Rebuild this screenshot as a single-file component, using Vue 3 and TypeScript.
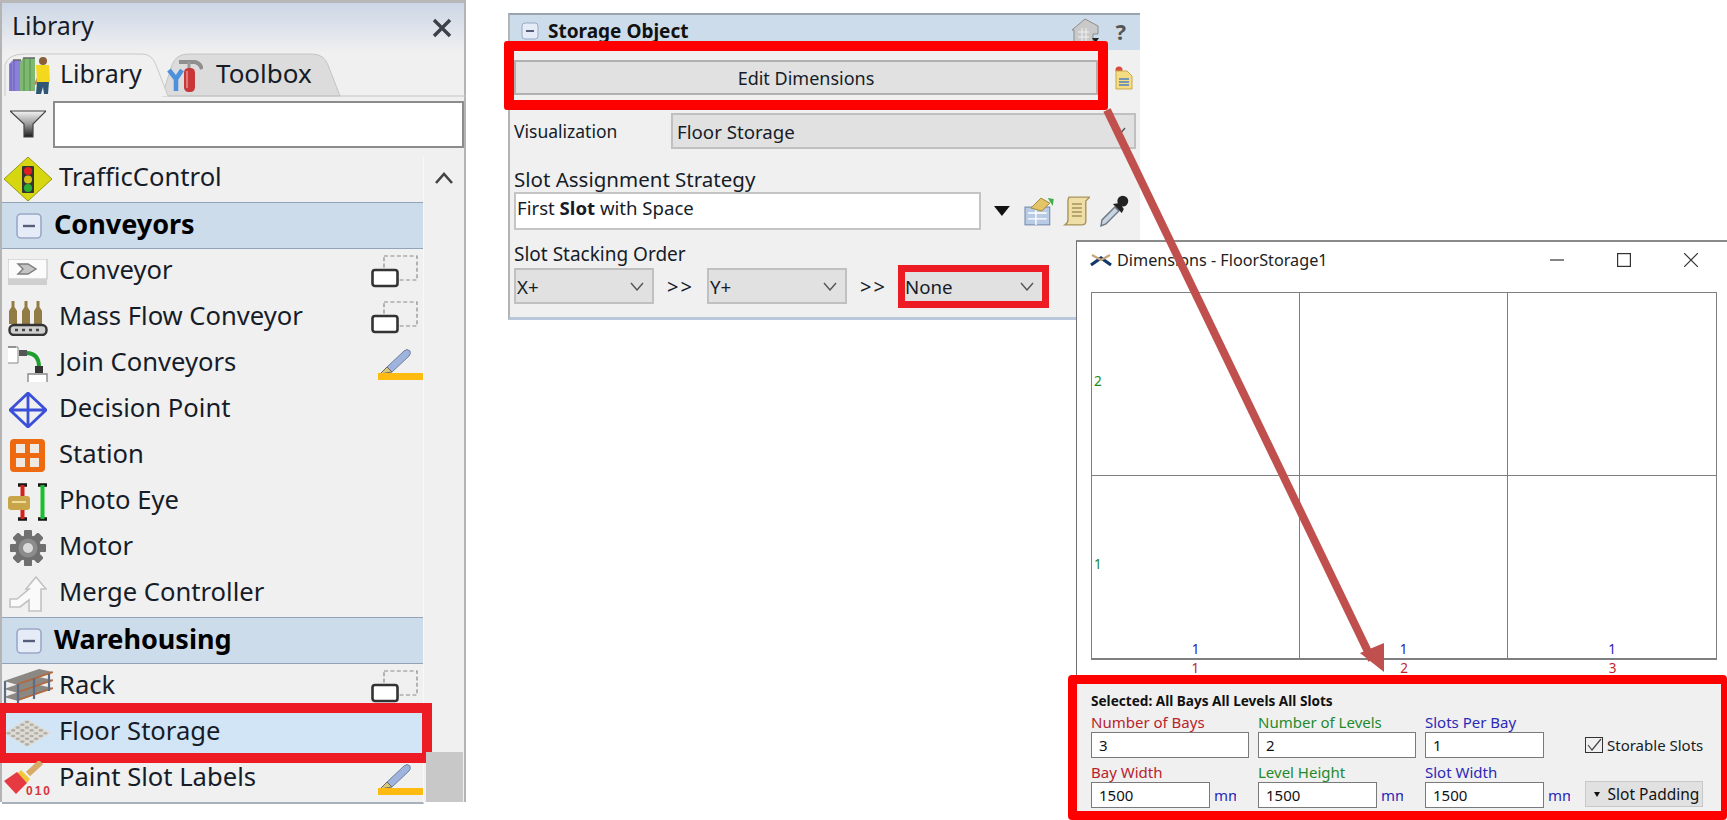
<script setup lang="ts">
interface LibraryRow {
  label: string
  icon: string
  tool?: 'size' | 'pen'
  header?: boolean
  selected?: boolean
}

const rows: LibraryRow[] = [
  { label: 'TrafficControl', icon: 'traffic' },
  { label: 'Conveyors', icon: 'minus', header: true },
  { label: 'Conveyor', icon: 'conveyor', tool: 'size' },
  { label: 'Mass Flow Conveyor', icon: 'massflow', tool: 'size' },
  { label: 'Join Conveyors', icon: 'join', tool: 'pen' },
  { label: 'Decision Point', icon: 'decision' },
  { label: 'Station', icon: 'station' },
  { label: 'Photo Eye', icon: 'photoeye' },
  { label: 'Motor', icon: 'motor' },
  { label: 'Merge Controller', icon: 'merge' },
  { label: 'Warehousing', icon: 'minus', header: true },
  { label: 'Rack', icon: 'rack', tool: 'size' },
  { label: 'Floor Storage', icon: 'floor', selected: true },
  { label: 'Paint Slot Labels', icon: 'paint', tool: 'pen' }
]

const cells = [
  { level: '2', bay: '' },
  { level: '', bay: '' },
  { level: '', bay: '' },
  { level: '1', bay: '1' },
  { level: '', bay: '1' },
  { level: '', bay: '1' }
]

const gearTeeth = [0, 45, 90, 135, 180, 225, 270, 315]

// dots of the floor storage tile, laid out on an isometric 5x5 grid
const floorDots: { x: number; y: number }[] = []
for (let u = 0; u < 5; u++) {
  for (let v = 0; v < 5; v++) {
    floorDots.push({ x: 23 + (u - v) * 4.6, y: 4 + (u + v) * 2.8 })
  }
}
</script>

<template>
  <div class="page">
    <aside class="library">
      <div class="library-title">
        <span class="title-text">Library</span>
        <svg class="close-x" width="20" height="20" viewBox="0 0 20 20">
          <path d="M2 2 18 18M18 2 2 18" stroke="#3c4048" stroke-width="3.4" fill="none" />
        </svg>
      </div>

      <div class="tabs">
        <svg class="tab-shape" width="464" height="44" viewBox="0 0 464 44">
          <path d="M160 43 L170 12 Q174 1 186 1 L310 1 Q322 1 326 12 L338 43 Z" fill="#dcdcdc" stroke="#c4c4c4" />
          <path d="M3 43 L3 12 Q6 1 22 1 L140 1 Q150 1 154 12 L166 43" fill="#f0f0f0" stroke="#c8c8c8" />
          <path d="M166 43 H464" stroke="#c4c4c4" />
        </svg>
        <div class="tab tab-library">
          <svg width="42" height="40" viewBox="0 0 42 40">
            <path d="M1 9 5 5H13V36H1Z" fill="#8a80d8" />
            <path d="M3 9V36M6 6V36" stroke="#6a60bc" />
            <path d="M12 8 15 3H27V36H12Z" fill="#7fb872" />
            <path d="M16 4V36M22 4V36" stroke="#4f8f48" />
            <path d="M5 5H13M15 3H27" stroke="#666" stroke-width="1.6" />
            <path d="M33 14 26 29 28 30 33 20Z" fill="#b98a56" />
            <circle cx="35" cy="6" r="4" fill="#8a5f38" />
            <path d="M28 10H41L42 27H29Z" fill="#f4d81e" />
            <path d="M29 27H41L40 39H36L35 32 33 39H28Z" fill="#2f5674" />
          </svg>
          <span>Library</span>
        </div>
        <div class="tab tab-toolbox">
          <svg width="36" height="36" viewBox="0 0 36 36">
            <path d="M12 5H28Q33 6 35 12" stroke="#8f8f8f" stroke-width="4" fill="none" />
            <path d="M22 5V12" stroke="#9a9a9a" stroke-width="3" fill="none" />
            <path d="M2 13 9 22V34M15 13 9 22" stroke="#4f90dc" stroke-width="4.6" fill="none" />
            <rect x="17" y="11" width="11" height="24" rx="4.500" fill="#c8383a" />
            <path d="M20 14V31" stroke="#e98a88" stroke-width="1.6" />
          </svg>
          <span>Toolbox</span>
        </div>
      </div>

      <div class="filter">
        <svg width="36" height="28" viewBox="0 0 36 28">
          <defs>
            <linearGradient id="funnel-fill" x1="0" y1="0" x2="0" y2="1">
              <stop offset="0" stop-color="#f4f4f4" />
              <stop offset="0.5" stop-color="#9a9a9a" />
              <stop offset="1" stop-color="#1c1c1c" />
            </linearGradient>
          </defs>
          <path d="M0 1H36L23 14V27H14V14Z" fill="url(#funnel-fill)" stroke="#444" stroke-width="1.2" />
        </svg>
        <div class="filter-input"></div>
      </div>

      <div class="list-wrap">
        <div class="list">
          <div
            v-for="row in rows"
            :key="row.label"
            class="row"
            :class="{ 'row-header': row.header, 'row-selected': row.selected }"
          >
            <span class="row-icon">
              <svg v-if="row.icon === 'minus'" width="26" height="26" viewBox="0 0 26 26">
                <rect x="1" y="1" width="24" height="24" rx="4" fill="#e6ecf7" stroke="#9aa8c8" stroke-width="1.6" />
                <path d="M7 13H19" stroke="#555f7a" stroke-width="2.4" />
              </svg>
              <svg v-else-if="row.icon === 'traffic'" width="48" height="44" viewBox="0 0 48 44">
                <path d="M24 0 48 22 24 44 0 22Z" fill="#d6d611" stroke="#9a9a10" />
                <rect x="18" y="9" width="12" height="27" rx="1" fill="#333" />
                <circle cx="24" cy="14" r="4" fill="#e02020" />
                <circle cx="24" cy="22.5" r="4" fill="#cfc30f" />
                <circle cx="24" cy="31" r="4" fill="#2cae32" />
              </svg>
              <svg v-else-if="row.icon === 'conveyor'" width="40" height="26" viewBox="0 0 40 26">
                <rect x="0" y="0" width="39" height="20" fill="#fbfbfb" stroke="#bbb" />
                <rect x="0" y="20" width="39" height="6" fill="#cfcfcf" />
                <path d="M10 5 H20 L28 10 20 15 H10 L15 10Z" fill="#c4c4c4" stroke="#7c7c7c" stroke-width="1.4" />
              </svg>
              <svg v-else-if="row.icon === 'massflow'" width="40" height="36" viewBox="0 0 40 36">
                <path d="M1 24V11L3.500 7V1H6.500V7L9 11V24ZM14 24V11L16.500 7V1H19.500V7L22 11V24ZM26 24V11L28.500 7V1H31.500V7L34 11V24Z" fill="#927c46" />
                <rect x="1.500" y="25" width="37" height="10" rx="4.500" fill="#cfcfcf" stroke="#333" stroke-width="2.4" />
                <path d="M7 30H33" stroke="#444" stroke-width="2.400" stroke-dasharray="3 4" />
              </svg>
              <svg v-else-if="row.icon === 'join'" width="40" height="36" viewBox="0 0 40 36">
                <path d="M0 1H10V17H0" fill="#fff" stroke="#888" />
                <path d="M0 1H8" stroke="#888" stroke-width="1.600" />
                <path d="M18 7C27 7 31 12 31 21" stroke="#1f9e2f" stroke-width="4" fill="none" />
                <rect x="11" y="4" width="8" height="6" fill="#555" />
                <rect x="27" y="20" width="8" height="7" fill="#333" />
                <path d="M20 36V28H39V36" fill="#fff" stroke="#888" stroke-width="1.400" />
              </svg>
              <svg v-else-if="row.icon === 'decision'" width="38" height="36" viewBox="0 0 38 36">
                <path d="M19 1 37 18 19 35 1 18ZM19 1V35M1 18H37" fill="none" stroke="#3b4fd8" stroke-width="2.8" />
              </svg>
              <svg v-else-if="row.icon === 'station'" width="36" height="34" viewBox="0 0 36 34">
                <rect x="0" y="0" width="35" height="33" rx="4" fill="#ee6a10" />
                <rect x="6" y="5" width="9" height="9" fill="#efe9e2" />
                <rect x="20" y="5" width="9" height="9" fill="#efe9e2" />
                <rect x="6" y="19" width="9" height="9" fill="#efe9e2" />
                <rect x="20" y="19" width="9" height="9" fill="#efe9e2" />
              </svg>
              <svg v-else-if="row.icon === 'photoeye'" width="40" height="38" viewBox="0 0 40 38">
                <path d="M10 2H19M10 36H19M30 2H39M30 36H39" stroke="#161616" stroke-width="3.6" />
                <path d="M14.5 2V36" stroke="#d62020" stroke-width="4" />
                <path d="M34.5 2V36" stroke="#19bf2e" stroke-width="4" />
                <rect x="0" y="13" width="22" height="14" rx="3" fill="#c9a54a" />
                <path d="M4 19H18" stroke="#eedc9c" stroke-width="2" />
              </svg>
              <svg v-else-if="row.icon === 'motor'" width="40" height="36" viewBox="0 0 40 36">
                <g fill="#707070">
                  <rect
                    v-for="deg in gearTeeth"
                    :key="deg"
                    x="16"
                    y="0"
                    width="8"
                    height="36"
                    rx="1.500"
                    :transform="`rotate(${deg} 20 18)`"
                  />
                </g>
                <circle cx="20" cy="18" r="13" fill="#707070" />
                <circle cx="20" cy="18" r="9.500" fill="#8c8c8c" />
                <circle cx="20" cy="18" r="5" fill="#dadada" />
              </svg>
              <svg v-else-if="row.icon === 'merge'" width="38" height="36" viewBox="0 0 38 36">
                <path d="M27 1 37 13H32V35H20V24L11 31H1V23H8L20 13H17Z" fill="#fafafa" stroke="#c2c2c2" stroke-width="1.6" />
              </svg>
              <svg v-else-if="row.icon === 'rack'" width="50" height="36" viewBox="0 0 50 36">
                <path d="M1 12 36 0 50 3 15 16ZM1 20 36 8 50 11 15 24ZM1 28 36 16 50 19 15 32Z" fill="#8b8782" />
                <path d="M15 15 50 3M15 23 50 11M15 31 50 19" stroke="#b5683a" stroke-width="1.800" />
                <path d="M2 12V36M15 15V36M31 9V30M46 5V22" stroke="#5f6b84" stroke-width="2.200" />
              </svg>
              <svg v-else-if="row.icon === 'floor'" width="48" height="30" viewBox="0 0 48 30">
                <path d="M0 15 23 1 47 15 23 29Z" fill="#dedcd5" />
                <ellipse
                  v-for="(dot, i) in floorDots"
                  :key="i"
                  :cx="dot.x"
                  :cy="dot.y"
                  rx="2.300"
                  ry="1.300"
                  fill="#b2b0a9"
                />
              </svg>
              <svg v-else-if="row.icon === 'paint'" width="50" height="36" viewBox="0 0 50 36">
                <path d="M38 1 25 13" stroke="#d8aa68" stroke-width="6" fill="none" />
                <path d="M18 9 27 18 24 22 14 13Z" fill="#f0c83a" />
                <path d="M1 20 14 11 24 22 13 33Z" fill="#e63a42" />
                <text x="23" y="34" class="paint-digits">010</text>
              </svg>
            </span>
            <span class="row-label">{{ row.label }}</span>
            <svg v-if="row.tool === 'size'" class="row-tool" width="48" height="34" viewBox="0 0 48 34">
              <rect x="13" y="1" width="33" height="24" fill="none" stroke="#8a8a8a" stroke-width="1.2" stroke-dasharray="4 2.4" />
              <rect x="1.5" y="15" width="25" height="16" rx="2.5" fill="#fff" stroke="#333" stroke-width="2.6" />
            </svg>
            <svg v-else-if="row.tool === 'pen'" class="row-tool pen" width="45" height="32" viewBox="0 0 45 32">
              <path d="M9 19 26 3Q29 0 32 3 33 6 31 8L14 24Z" fill="#9fb4dc" stroke="#6f7f9f" />
              <path d="M9 19 14 24 2 26Z" fill="#d8c77a" stroke="#666" />
              <rect x="0" y="25" width="45" height="7" fill="#ffbb12" />
            </svg>
          </div>
        </div>
        <div class="scrollbar">
          <svg class="chevron" width="20" height="14" viewBox="0 0 20 14">
            <path d="M2 12 10 3 18 12" fill="none" stroke="#444" stroke-width="2.6" />
          </svg>
          <div class="thumb"></div>
        </div>
      </div>
    </aside>

    <section class="storage">
      <header class="storage-head">
        <svg width="18" height="18" viewBox="0 0 18 18">
          <rect x="1" y="1" width="16" height="16" rx="3" fill="#e6ecf7" stroke="#9aa8c8" />
          <path d="M5 9H13" stroke="#555f7a" stroke-width="2" />
        </svg>
        <span class="storage-title">Storage Object</span>
        <svg class="storage-house" width="28" height="26" viewBox="0 0 28 26">
          <path d="M1 12 14 1 27 8V16H22V25H3V12Z" fill="#c9c9c9" stroke="#8c8c8c" />
          <path d="M7 14H18M7 19H18M11 10V25M15 10V25" stroke="#f2f2f2" />
          <path d="M21 20H28L24.500 25Z" fill="#222" />
        </svg>
        <span class="help">?</span>
      </header>

      <div class="edit-row">
        <button class="edit-btn">Edit Dimensions</button>
        <svg class="clip-icon" width="20" height="24" viewBox="0 0 20 24">
          <circle cx="6" cy="4" r="3.500" fill="#d84a3a" />
          <path d="M3 5H14L19 10V23H3Z" fill="#f4dc82" stroke="#c8a94e" />
          <path d="M6 13H16M6 16H16M6 19H16" stroke="#4f7cc4" stroke-width="1.4" />
        </svg>
      </div>

      <div class="vis-row">
        <span class="text-label">Visualization</span>
        <div class="combo vis-combo">
          <span>Floor Storage</span>
          <svg width="14" height="9" viewBox="0 0 14 9"><path d="M1 1 7 8 13 1" fill="none" stroke="#555" stroke-width="1.4" /></svg>
        </div>
      </div>

      <div class="text-label strategy-label">Slot Assignment Strategy</div>
      <div class="strategy-row">
        <div class="strategy-input">First <b>Slot</b> with Space</div>
        <svg class="caret" width="16" height="10" viewBox="0 0 16 10"><path d="M0 0H16L8 10Z" fill="#111" /></svg>
        <svg width="30" height="30" viewBox="0 0 30 30">
          <rect x="1" y="11" width="25" height="18" fill="#b8cbe4" stroke="#6f86a8" />
          <path d="M4 17H23M4 23H23M12 11V29" stroke="#fff" stroke-width="1.4" />
          <path d="M7 12 17 2 26 7 18 15Z" fill="#e4c468" stroke="#a58a2e" />
          <path d="M24 2 30 3 29 10Z" fill="#3fae4a" />
        </svg>
        <svg width="28" height="30" viewBox="0 0 28 30">
          <path d="M6 1H27L23 5V25Q23 29 19 29H2Q5 27 5 24V4Z" fill="#efdfa6" stroke="#a7935a" stroke-width="1.4" />
          <path d="M9 8H19M9 12H19M9 16H19M9 20H19" stroke="#a7935a" stroke-width="1.6" />
        </svg>
        <svg width="30" height="34" viewBox="0 0 30 34">
          <path d="M2 32 3 26 16 13 20 17 7 30Z" fill="#c8d4e0" stroke="#6d7782" stroke-width="1.4" />
          <path d="M14 10 23 19 25 15 21 9Z" fill="#222" />
          <circle cx="24" cy="7" r="5.500" fill="#222" />
        </svg>
      </div>

      <div class="text-label order-label">Slot Stacking Order</div>
      <div class="order-row">
        <div class="combo order-combo">
          <span>X+</span>
          <svg width="14" height="9" viewBox="0 0 14 9"><path d="M1 1 7 8 13 1" fill="none" stroke="#555" stroke-width="1.4" /></svg>
        </div>
        <span class="gtgt">&gt;&gt;</span>
        <div class="combo order-combo">
          <span>Y+</span>
          <svg width="14" height="9" viewBox="0 0 14 9"><path d="M1 1 7 8 13 1" fill="none" stroke="#555" stroke-width="1.4" /></svg>
        </div>
        <span class="gtgt">&gt;&gt;</span>
        <div class="combo none-combo">
          <span>None</span>
          <svg width="14" height="9" viewBox="0 0 14 9"><path d="M1 1 7 8 13 1" fill="none" stroke="#555" stroke-width="1.4" /></svg>
        </div>
      </div>
    </section>

    <section class="dims">
      <header class="dims-title">
        <svg width="24" height="14" viewBox="0 0 24 14">
          <path d="M2 12 12 5 22 12" fill="none" stroke="#12386b" stroke-width="3.200" />
          <path d="M3 2 12 7 21 2" fill="none" stroke="#c6a57c" stroke-width="2.200" />
        </svg>
        <span class="dims-name">Dimensions - FloorStorage1</span>
        <svg class="win-btn" width="14" height="14" viewBox="0 0 14 14"><path d="M0 7H14" stroke="#333" stroke-width="1.200" /></svg>
        <svg class="win-btn" width="14" height="14" viewBox="0 0 14 14"><rect x=".6" y=".6" width="12.800" height="12.800" fill="none" stroke="#333" stroke-width="1.200" /></svg>
        <svg class="win-btn" width="14" height="14" viewBox="0 0 14 14"><path d="M0 0 14 14M14 0 0 14" stroke="#333" stroke-width="1.200" /></svg>
      </header>

      <div class="grid">
        <div v-for="(cell, i) in cells" :key="i" class="cell">
          <span class="level-no">{{ cell.level }}</span>
          <span class="slot-no">{{ cell.bay }}</span>
        </div>
      </div>
      <div class="bay-numbers">
        <span>1</span>
        <span>2</span>
        <span>3</span>
      </div>

      <div class="form">
        <div class="selected">Selected: All Bays All Levels All Slots</div>
        <div class="form-grid">
          <div class="field">
            <label class="red">Number of Bays</label>
            <div class="input wide">3</div>
          </div>
          <div class="field">
            <label class="green">Number of Levels</label>
            <div class="input wide">2</div>
          </div>
          <div class="field">
            <label class="blue">Slots Per Bay</label>
            <div class="input narrow">1</div>
          </div>
          <div class="check">
            <span class="check-box">
              <svg width="15" height="13" viewBox="0 0 15 13"><path d="M1 7 5 12 14 1" fill="none" stroke="#444" stroke-width="1.200" /></svg>
            </span>
            <span>Storable Slots</span>
          </div>
          <div class="field">
            <label class="red">Bay Width</label>
            <div class="with-unit"><div class="input narrow">1500</div><span class="unit">mm</span></div>
          </div>
          <div class="field">
            <label class="green">Level Height</label>
            <div class="with-unit"><div class="input narrow">1500</div><span class="unit">mm</span></div>
          </div>
          <div class="field">
            <label class="blue">Slot Width</label>
            <div class="with-unit"><div class="input narrow">1500</div><span class="unit">mm</span></div>
          </div>
          <button class="padding-btn"><i class="mini-caret"></i>Slot Padding</button>
        </div>
      </div>
    </section>

    <svg class="arrow" width="1727" height="820" viewBox="0 0 1727 820">
      <path d="M1107 110 1372 660" stroke="#c0504d" stroke-width="8" fill="none" />
      <path d="M1360 653 1384 643 1384 672Z" fill="#c0504d" />
    </svg>
  </div>
</template>

<style>
html,
body {
  margin: 0;
  background: #fff;
}
</style>

<style scoped>
.page {
  position: relative;
  display: flex;
  align-items: flex-start;
  width: 1727px;
  height: 820px;
  overflow: hidden;
  background: #fff;
  font-family: 'Noto Sans', 'Open Sans', sans-serif;
  color: #161c28;
}

/* left library panel */
.library {
  box-sizing: border-box;
  width: 466px;
  height: 802px;
  border-top: 3px solid #b8b8b8;
  border-left: 2px solid #b4b4b4;
  border-right: 2px solid #b4b4b4;
  background: #f0f0f0;
  display: flex;
  flex-direction: column;
}

.library-title {
  height: 50px;
  flex: none;
  display: flex;
  align-items: center;
  justify-content: space-between;
  padding: 0 12px 0 10px;
  font-size: 25px;
  background: linear-gradient(#ccd6e6, #f0f0f0);
}

.title-text {
  margin-top: -7px;
}

.tabs {
  position: relative;
  height: 44px;
  flex: none;
  display: flex;
  font-size: 25px;
}

.tab-shape {
  position: absolute;
  left: 0;
  top: 0;
}

.tab {
  position: relative;
  display: flex;
  align-items: center;
}

.tab span {
  margin-top: -5px;
}

.tab-library {
  width: 163px;
  padding-left: 6px;
  gap: 10px;
  box-sizing: border-box;
}

.tab-toolbox {
  padding-left: 2px;
  gap: 13px;
  font-size: 26px;
}

.filter {
  height: 54px;
  flex: none;
  display: flex;
  align-items: center;
  padding-left: 8px;
  gap: 7px;
}

.filter-input {
  flex: 1;
  height: 47px;
  box-sizing: border-box;
  background: #fff;
  border: 2px solid #8c8c8c;
}

.list-wrap {
  flex: 1;
  display: flex;
  min-height: 0;
  padding-top: 5px;
}

.list {
  width: 421px;
  flex: none;
  border-right: 1px solid #f8f8f8;
  border-bottom: 2px solid #a8b0bc;
  margin-bottom: -2px;
}

.row {
  position: relative;
  height: 46px;
  display: flex;
  align-items: center;
  font-size: 25.6px;
}

.row-icon {
  width: 57px;
  flex: none;
  display: flex;
  justify-content: center;
  padding-right: 5px;
  box-sizing: border-box;
}

.row-label {
  flex: 1;
  white-space: nowrap;
  margin-top: -5px;
}

.row-tool {
  margin-right: 4px;
}

.row-tool.pen {
  margin-right: 0;
}

.row-header {
  height: 47px;
  box-sizing: border-box;
  background: #cddcea;
  border-top: 1px solid #94a4b8;
  border-bottom: 1px solid #94a4b8;
  font-weight: 700;
  font-size: 27px;
  color: #000;
}

.row-header .row-icon {
  width: 52px;
  padding-right: 0;
  padding-left: 2px;
}

.row-selected {
  background: #d2e5f6;
}

.row-selected::after {
  content: '';
  position: absolute;
  left: -2px;
  right: -9px;
  top: -7px;
  bottom: -7px;
  border: 10px solid #ed1c24;
  border-left-width: 6px;
  pointer-events: none;
}

.paint-digits {
  font-family: 'Liberation Sans', sans-serif;
  font-size: 12px;
  font-weight: 700;
  letter-spacing: 2px;
  fill: #d8353b;
}

.scrollbar {
  flex: 1;
  position: relative;
}

.chevron {
  position: absolute;
  left: 10px;
  top: 15px;
}

.thumb {
  position: absolute;
  left: 2px;
  right: 1px;
  bottom: 0;
  height: 50px;
  background: #c8c8c8;
}

/* storage object properties */
.storage {
  box-sizing: border-box;
  width: 632px;
  height: 307px;
  margin: 13px 0 0 42px;
  padding: 0 2px 0 4px;
  background: #f0f0f0;
  border-top: 2px solid #9aa4b0;
  border-left: 2px solid #b4b4b4;
  border-bottom: 3px solid #b8c8da;
}

.storage-head {
  box-sizing: border-box;
  height: 35px;
  margin: 0 -2px 0 -4px;
  padding: 0 14px 4px 11px;
  background: #cddcea;
  display: flex;
  align-items: center;
  gap: 9px;
}

.storage-title {
  flex: 1;
  font-weight: 700;
  font-size: 19px;
  color: #111;
}

.storage-house {
  margin-right: 8px;
}

.help {
  font-weight: 700;
  font-size: 22px;
  color: #555;
}

.edit-row {
  position: relative;
  height: 60px;
  display: flex;
  align-items: flex-start;
  gap: 15px;
  margin-left: -2px;
}

.edit-row::before {
  content: '';
  position: absolute;
  left: -8px;
  width: 604px;
  top: -9px;
  height: 69px;
  box-sizing: border-box;
  border: 10px solid #f00;
  border-radius: 3px;
  pointer-events: none;
}

.edit-btn {
  width: 584px;
  height: 35px;
  margin-left: 2px;
  margin-top: 10px;
  background: #e1e1e1;
  border: 2px solid #b0b0b0;
  font-family: inherit;
  font-size: 18px;
  color: #161c28;
}

.clip-icon {
  margin-top: 16px;
}

.vis-row {
  display: flex;
  align-items: center;
  height: 36px;
  margin-top: 3px;
}

.text-label {
  font-size: 19px;
  white-space: nowrap;
}

.vis-row .text-label {
  width: 157px;
  font-size: 17.5px;
}

.combo {
  box-sizing: border-box;
  height: 36px;
  background: #e1e1e1;
  border: 2px solid #c0c0c0;
  display: flex;
  align-items: center;
  justify-content: space-between;
  font-size: 18.7px;
  padding: 0 8px 0 1px;
}

.vis-combo {
  width: 465px;
  padding-left: 4px;
}

.strategy-label {
  margin-top: 18px;
  height: 25px;
  line-height: 25px;
  font-size: 20.5px;
}

.strategy-row {
  display: flex;
  align-items: center;
  height: 38px;
}

.strategy-input {
  box-sizing: border-box;
  width: 471px;
  height: 38px;
  background: #fff;
  border: 2px solid #c4c4c4;
  font-size: 18.6px;
  line-height: 28px;
  padding: 0 0 0 1px;
  margin-right: 13px;
}

.strategy-row svg {
  margin-right: 9px;
}

.caret {
  margin-right: 14px !important;
}

.order-label {
  margin-top: 13px;
  height: 23px;
  line-height: 23px;
}

.order-row {
  display: flex;
  align-items: center;
  height: 40px;
}

.order-combo {
  width: 140px;
}

.gtgt {
  width: 53px;
  text-align: center;
  font-size: 20px;
  letter-spacing: 2px;
}

.none-combo {
  box-sizing: border-box;
  width: 151px;
  height: 43px;
  border: 7px solid #ed1c24;
  margin-left: -2px;
  padding-left: 0;
}

/* dimensions window */
.dims {
  position: absolute;
  left: 1076px;
  top: 240px;
  right: 0;
  bottom: 0;
  box-sizing: border-box;
  background: #fff;
  border-top: 2px solid #8a8a8a;
  border-left: 1px solid #707070;
  display: flex;
  flex-direction: column;
}

.dims-title {
  height: 36px;
  flex: none;
  display: flex;
  align-items: center;
  padding: 0 29px 0 12px;
  font-size: 16.2px;
  color: #222;
}

.dims-name {
  flex: 1;
  margin-left: 4px;
}

.win-btn {
  margin-left: 53px;
}

.grid {
  flex: none;
  margin: 14px 10px 0 14px;
  height: 368px;
  box-sizing: border-box;
  display: grid;
  grid-template-columns: repeat(3, 1fr);
  grid-template-rows: repeat(2, 1fr);
  border: 1px solid #7f7f7f;
  border-bottom-width: 2px;
}

.cell {
  position: relative;
  display: flex;
  align-items: center;
  border-right: 1px solid #7f7f7f;
  border-bottom: 1px solid #7f7f7f;
  font-size: 13.5px;
}

.cell:nth-child(3n) {
  border-right: none;
}

.cell:nth-child(n + 4) {
  border-bottom: none;
}

.level-no {
  padding: 0 0 6px 2px;
  color: #178a17;
}

.slot-no {
  position: absolute;
  left: 0;
  right: 0;
  bottom: 0;
  text-align: center;
  line-height: 18px;
  color: #2a22b8;
}

.bay-numbers {
  display: grid;
  grid-template-columns: repeat(3, 1fr);
  margin: 0 10px 0 14px;
  height: 15px;
  line-height: 17px;
  text-align: center;
  font-size: 13.5px;
  color: #c3252b;
}

.form {
  flex: 1;
  box-sizing: border-box;
  margin-left: -9px;
  padding: 8px 0 0 14px;
  background: #f0f0f0;
  border: 9px solid #f00;
  border-right-width: 6px;
  border-radius: 4px;
  font-size: 15px;
  position: relative;
  z-index: 1;
}

.selected {
  height: 17px;
  line-height: 17px;
  font-size: 13.6px;
  font-weight: 700;
  color: #111;
}

.form-grid {
  display: grid;
  grid-template-columns: 167px 167px 160px auto;
  grid-template-rows: 45px 46px;
  margin-top: 5px;
  row-gap: 5px;
}

.field {
  display: flex;
  flex-direction: column;
}

.field label {
  height: 19px;
  line-height: 19px;
  margin-top: -1px;
  font-size: 15px;
  white-space: nowrap;
}

.red {
  color: #b8232b;
}

.green {
  color: #1f8a2c;
}

.blue {
  color: #2a2ab8;
}

.input {
  box-sizing: border-box;
  height: 26px;
  background: #fff;
  border: 1px solid #7a7a7a;
  line-height: 24px;
  padding-left: 7px;
  font-size: 15px;
  color: #111;
}

.wide {
  width: 158px;
}

.narrow {
  width: 119px;
}

.with-unit {
  display: flex;
  align-items: center;
}

.unit {
  width: 22px;
  margin-left: 4px;
  overflow: hidden;
  white-space: nowrap;
  font-size: 15px;
  color: #2a2ab8;
}

.check {
  display: flex;
  align-items: center;
  gap: 4px;
  padding-top: 16px;
  height: 29px;
  white-space: nowrap;
}

.check-box {
  box-sizing: border-box;
  width: 18px;
  height: 16px;
  border: 1px solid #333;
  display: flex;
  align-items: center;
  justify-content: center;
}

.padding-btn {
  box-sizing: border-box;
  width: 118px;
  height: 26px;
  margin-top: 17px;
  background: #e1e1e1;
  border: 1px solid #c8c8c8;
  font-family: inherit;
  font-size: 15.5px;
  color: #111;
  padding: 0 0 0 5px;
  display: flex;
  align-items: center;
  justify-content: center;
  gap: 8px;
}

.mini-caret {
  width: 0;
  height: 0;
  border-left: 3.5px solid transparent;
  border-right: 3.5px solid transparent;
  border-top: 5px solid #111;
}

.arrow {
  position: absolute;
  left: 0;
  top: 0;
  z-index: 2;
  pointer-events: none;
}
</style>
